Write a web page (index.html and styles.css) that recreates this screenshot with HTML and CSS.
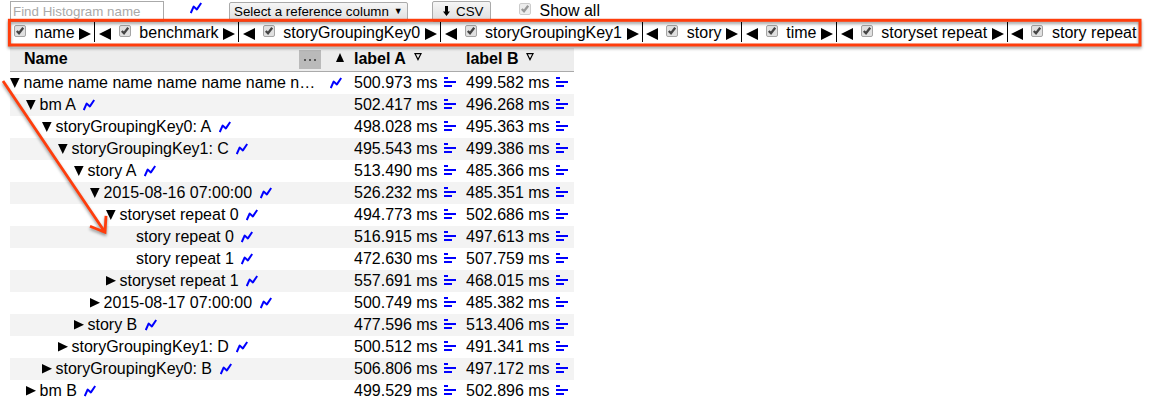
FILE: index.html
```
<!DOCTYPE html>
<html lang="en">
<head>
<meta charset="utf-8">
<title>Histogram table</title>
<link rel="stylesheet" href="styles.css">
</head>
<body>
<svg class="defs" width="0" height="0">
  <symbol id="spark" viewBox="0 0 12 12"><path d="M.8 11 3.6 4.6 6.9 7.4 11.2 1" fill="none" stroke="#00f" stroke-width="2" stroke-linejoin="round"/></symbol>
  <symbol id="down" viewBox="0 0 10 10"><path d="M0 0h9.6L4.8 10z"/></symbol>
  <symbol id="right" viewBox="0 0 10 10"><path d="M0 0v9.6l10-4.8z"/></symbol>
  <symbol id="prev" viewBox="0 0 12 12"><path d="M12 0v12L0 6z"/></symbol>
  <symbol id="next" viewBox="0 0 12 12"><path d="M0 0v12l12-6z"/></symbol>
  <symbol id="bars" viewBox="0 0 12 11"><path d="M0 1h4M0 5h12M0 9h8" stroke="#00f" stroke-width="2"/></symbol>
  <symbol id="check" viewBox="0 0 12 12"><rect x=".5" y=".5" width="11" height="11" rx="1.5" fill="#e0e0e0" stroke="#a4a4a4"/><path d="M2.8 6 5 8.3 9.2 2.8" fill="none" stroke="#444" stroke-width="2.3"/></symbol>
</svg>
<div class="toolbar">
  <div class="search">Find Histogram name</div>
  <svg class="spark overview"><use href="#spark"/></svg>
  <div class="select">Select a reference column<span class="caret">▼</span></div>
  <div class="button"><svg width="7" height="10" viewBox="0 0 7 10"><path d="M2 0h3v5.5h2L3.5 10 0 5.5h2z"/></svg>CSV</div>
  <svg class="check disabled"><use href="#check"/></svg>
  <span class="showall">Show all</span>
</div>
<div class="keys">
  <div class="key first"><svg class="check"><use href="#check"/></svg><span>name</span><svg class="next"><use href="#next"/></svg></div>
  <div class="key"><svg class="prev"><use href="#prev"/></svg><svg class="check"><use href="#check"/></svg><span>benchmark</span><svg class="next"><use href="#next"/></svg></div>
  <div class="key"><svg class="prev"><use href="#prev"/></svg><svg class="check"><use href="#check"/></svg><span>storyGroupingKey0</span><svg class="next"><use href="#next"/></svg></div>
  <div class="key"><svg class="prev"><use href="#prev"/></svg><svg class="check"><use href="#check"/></svg><span>storyGroupingKey1</span><svg class="next"><use href="#next"/></svg></div>
  <div class="key"><svg class="prev"><use href="#prev"/></svg><svg class="check"><use href="#check"/></svg><span>story</span><svg class="next"><use href="#next"/></svg></div>
  <div class="key"><svg class="prev"><use href="#prev"/></svg><svg class="check"><use href="#check"/></svg><span>time</span><svg class="next"><use href="#next"/></svg></div>
  <div class="key"><svg class="prev"><use href="#prev"/></svg><svg class="check"><use href="#check"/></svg><span>storyset repeat</span><svg class="next"><use href="#next"/></svg></div>
  <div class="key"><svg class="prev"><use href="#prev"/></svg><svg class="check"><use href="#check"/></svg><span>story repeat</span></div>
</div>
<div class="table">
  <div class="head">
    <div class="title">Name</div>
    <div class="more"><i></i><i></i><i></i></div>
    <svg class="sort" viewBox="0 0 8 9"><path d="M4 0 8 9H0z"/></svg>
    <div class="label">label A<svg width="8" height="8" viewBox="0 0 8 8"><path d="M1 .7h6L4 6.6z" fill="none" stroke="#000" stroke-width="1.2"/></svg></div>
    <div class="label">label B<svg width="8" height="8" viewBox="0 0 8 8"><path d="M1 .7h6L4 6.6z" fill="none" stroke="#000" stroke-width="1.2"/></svg></div>
  </div>
  <div class="row"><div class="name l0"><svg class="tri"><use href="#down"/></svg><span class="clip">name name name name name name n…</span><svg class="spark end"><use href="#spark"/></svg></div><div class="val">500.973 ms<svg><use href="#bars"/></svg></div><div class="val">499.582 ms<svg><use href="#bars"/></svg></div></div>
  <div class="row"><div class="name l1"><svg class="tri"><use href="#down"/></svg>bm A<svg class="spark"><use href="#spark"/></svg></div><div class="val">502.417 ms<svg><use href="#bars"/></svg></div><div class="val">496.268 ms<svg><use href="#bars"/></svg></div></div>
  <div class="row"><div class="name l2"><svg class="tri"><use href="#down"/></svg>storyGroupingKey0: A<svg class="spark"><use href="#spark"/></svg></div><div class="val">498.028 ms<svg><use href="#bars"/></svg></div><div class="val">495.363 ms<svg><use href="#bars"/></svg></div></div>
  <div class="row"><div class="name l3"><svg class="tri"><use href="#down"/></svg>storyGroupingKey1: C<svg class="spark"><use href="#spark"/></svg></div><div class="val">495.543 ms<svg><use href="#bars"/></svg></div><div class="val">499.386 ms<svg><use href="#bars"/></svg></div></div>
  <div class="row"><div class="name l4"><svg class="tri"><use href="#down"/></svg>story A<svg class="spark"><use href="#spark"/></svg></div><div class="val">513.490 ms<svg><use href="#bars"/></svg></div><div class="val">485.366 ms<svg><use href="#bars"/></svg></div></div>
  <div class="row"><div class="name l5"><svg class="tri"><use href="#down"/></svg>2015-08-16 07:00:00<svg class="spark"><use href="#spark"/></svg></div><div class="val">526.232 ms<svg><use href="#bars"/></svg></div><div class="val">485.351 ms<svg><use href="#bars"/></svg></div></div>
  <div class="row"><div class="name l6"><svg class="tri"><use href="#down"/></svg>storyset repeat 0<svg class="spark"><use href="#spark"/></svg></div><div class="val">494.773 ms<svg><use href="#bars"/></svg></div><div class="val">502.686 ms<svg><use href="#bars"/></svg></div></div>
  <div class="row"><div class="name leaf">story repeat 0<svg class="spark"><use href="#spark"/></svg></div><div class="val">516.915 ms<svg><use href="#bars"/></svg></div><div class="val">497.613 ms<svg><use href="#bars"/></svg></div></div>
  <div class="row"><div class="name leaf">story repeat 1<svg class="spark"><use href="#spark"/></svg></div><div class="val">472.630 ms<svg><use href="#bars"/></svg></div><div class="val">507.759 ms<svg><use href="#bars"/></svg></div></div>
  <div class="row"><div class="name l6"><svg class="tri"><use href="#right"/></svg>storyset repeat 1<svg class="spark"><use href="#spark"/></svg></div><div class="val">557.691 ms<svg><use href="#bars"/></svg></div><div class="val">468.015 ms<svg><use href="#bars"/></svg></div></div>
  <div class="row"><div class="name l5"><svg class="tri"><use href="#right"/></svg>2015-08-17 07:00:00<svg class="spark"><use href="#spark"/></svg></div><div class="val">500.749 ms<svg><use href="#bars"/></svg></div><div class="val">485.382 ms<svg><use href="#bars"/></svg></div></div>
  <div class="row"><div class="name l4"><svg class="tri"><use href="#right"/></svg>story B<svg class="spark"><use href="#spark"/></svg></div><div class="val">477.596 ms<svg><use href="#bars"/></svg></div><div class="val">513.406 ms<svg><use href="#bars"/></svg></div></div>
  <div class="row"><div class="name l3"><svg class="tri"><use href="#right"/></svg>storyGroupingKey1: D<svg class="spark"><use href="#spark"/></svg></div><div class="val">500.512 ms<svg><use href="#bars"/></svg></div><div class="val">491.341 ms<svg><use href="#bars"/></svg></div></div>
  <div class="row"><div class="name l2"><svg class="tri"><use href="#right"/></svg>storyGroupingKey0: B<svg class="spark"><use href="#spark"/></svg></div><div class="val">506.806 ms<svg><use href="#bars"/></svg></div><div class="val">497.172 ms<svg><use href="#bars"/></svg></div></div>
  <div class="row"><div class="name l1"><svg class="tri"><use href="#right"/></svg>bm B<svg class="spark"><use href="#spark"/></svg></div><div class="val">499.529 ms<svg><use href="#bars"/></svg></div><div class="val">502.896 ms<svg><use href="#bars"/></svg></div></div>
</div>
<svg class="annotation" width="1151" height="401" viewBox="0 0 1151 401" fill="none" stroke="#ff3d0c">
  <rect x="9.4" y="20.3" width="1130.6" height="24.7" stroke-width="3"/>
  <path d="M3 81 104.5 231.5M90 226.3l15 6 1-16.5" stroke-width="2.8"/>
</svg>
</body>
</html>
```
FILE: styles.css
```
* { box-sizing: border-box; }
html, body { height: 401px; overflow: hidden; }
body { margin: 0; background: #fff; color: #000; font: 16px/22px "Liberation Sans", Arial, sans-serif; }
svg { display: block; flex: none; }
.defs { position: absolute; }
.toolbar { display: flex; align-items: flex-start; height: 22px; padding-left: 10px; white-space: nowrap; }
.search { width: 154px; height: 21px; margin-top: 1px; padding-left: 2px; border: 1px solid #aaa; color: #a9a9a9; font-size: 13.33px; line-height: 20px; }
.spark { width: 12px; height: 12px; margin: 0 0 1px 7.5px; }
.overview { margin: 2px 0 0 26px; }
.select, .button { display: flex; height: 20px; margin-top: 2px; border: 1px solid #aaa; border-radius: 2px; background: linear-gradient(#f6f6f6, #dedede); font-size: 13.33px; line-height: 18px; }
.select { width: 179px; margin-left: 27px; padding-left: 4px; }
.caret { margin-left: 5px; font-size: 9px; line-height: 16px; }
.button { width: 59px; height: 21px; margin: 1px 0 0 24px; padding-left: 10px; line-height: 20px; }
.button svg { margin: 4px 6px 0 0; }
.check { width: 12px; height: 12px; }
.disabled { margin: 3px 0 0 28px; opacity: .55; }
.showall { margin-left: 8.5px; line-height: 21px; }
.keys { display: flex; height: 26px; padding-left: 10px; white-space: nowrap; }
.key { display: flex; flex: none; height: 20px; padding-left: 3.5px; border-left: 1px solid #000; line-height: 21px; }
.first { padding-left: 4px; border: 0; }
.key .check { margin: 3px 8.5px 0 8px; }
.first .check { margin-left: 0; }
.prev, .next { width: 12px; height: 12px; margin-top: 6px; }
.next { margin: 6px 3px 0 4.8px; }
.table { width: 564px; margin-left: 10px; }
.head { display: flex; height: 24px; background: #ededed; border-bottom: 1px solid #aaa; font-weight: bold; line-height: 22px; }
.title { flex: none; width: 289px; padding-left: 14px; }
.more { display: flex; flex: none; justify-content: center; gap: 3px; width: 22px; height: 19px; margin-top: 2px; padding-top: 9px; background: #bababa; }
.more i { width: 2px; height: 2px; background: #555; }
.sort { width: 8px; height: 9px; margin: 5px 10px 0 15px; }
.label { display: flex; flex: none; width: 112px; }
.label:last-child { width: 108px; }
.label svg { margin: 5px 0 0 8px; }
.row { display: flex; height: 22px; white-space: nowrap; }
.row:nth-child(odd) { background: #f3f3f3; }
.name { display: flex; flex: none; align-items: center; width: 344px; }
.tri { width: 10px; height: 10px; margin: 0 3.5px 1px 0; }
.l1 { padding-left: 16px; }
.l2 { padding-left: 32px; }
.l3 { padding-left: 48px; }
.l4 { padding-left: 64px; }
.l5 { padding-left: 80px; }
.l6 { padding-left: 96px; }
.leaf { padding-left: 126px; }
.end { margin: 0 12px 1px auto; }
.val { display: flex; flex: none; width: 112px; }
.val:last-child { width: 108px; }
.val svg { width: 12px; height: 11px; margin: 5px 0 0 6px; }
.annotation { position: absolute; top: 0; left: 0; filter: drop-shadow(0 2px 1.5px #0006); pointer-events: none; }
```
